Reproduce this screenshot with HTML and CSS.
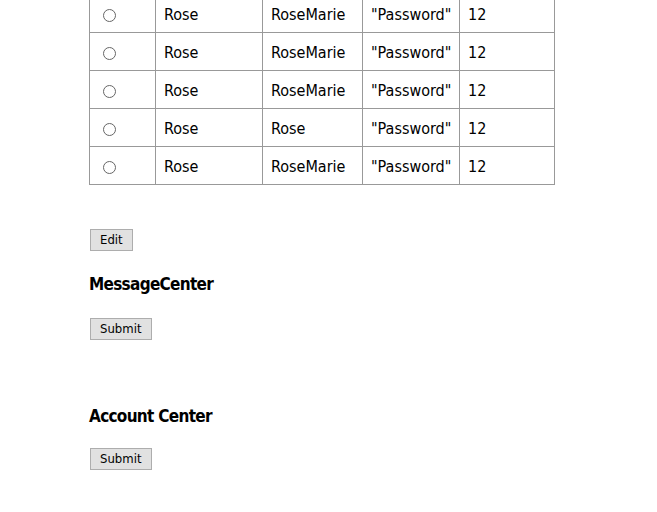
FILE: index.html
```html
<!DOCTYPE html>
<html>
<head>
<meta charset="utf-8">
<link rel="stylesheet" href="styles.css">
</head>
<body>
<main class="page">
  <table class="users">
    <tr><td class="c-sel"><span class="radio"></span></td><td class="c-first">Rose</td><td class="c-user">RoseMarie</td><td class="c-pass">"Password"</td><td class="c-age">12</td></tr>
    <tr><td class="c-sel"><span class="radio"></span></td><td class="c-first">Rose</td><td class="c-user">RoseMarie</td><td class="c-pass">"Password"</td><td class="c-age">12</td></tr>
    <tr><td class="c-sel"><span class="radio"></span></td><td class="c-first">Rose</td><td class="c-user">RoseMarie</td><td class="c-pass">"Password"</td><td class="c-age">12</td></tr>
    <tr><td class="c-sel"><span class="radio"></span></td><td class="c-first">Rose</td><td class="c-user">Rose</td><td class="c-pass">"Password"</td><td class="c-age">12</td></tr>
    <tr><td class="c-sel"><span class="radio"></span></td><td class="c-first">Rose</td><td class="c-user">RoseMarie</td><td class="c-pass">"Password"</td><td class="c-age">12</td></tr>
  </table>
  <button class="btn btn-edit">Edit</button>
  <h3 class="heading heading-msg">MessageCenter</h3>
  <button class="btn">Submit</button>
  <h3 class="heading heading-acct">Account Center</h3>
  <button class="btn">Submit</button>
</main>
</body>
</html>
```
FILE: styles.css
```css
html, body {
  margin: 0;
  padding: 0;
  background: #fff;
}
body {
  font-family: "DejaVu Sans Condensed", "DejaVu Sans", sans-serif;
  font-stretch: condensed;
  color: #000;
  overflow: hidden;
}
.page {
  padding-left: 89px;
  display: flex;
  flex-direction: column;
  align-items: flex-start;
}
.users {
  border-collapse: collapse;
  margin-top: -6px;
  font-size: 16px;
}
.users td {
  border: 1px solid #999;
  height: 38px;
  padding: 2px 0 0 8px;
  box-sizing: border-box;
  vertical-align: middle;
  white-space: nowrap;
}
.users td.c-sel { width: 66px; padding-left: 13px; }
.users td.c-first { width: 107px; }
.users td.c-user { width: 100px; }
.users td.c-pass { width: 97px; }
.users td.c-age { width: 95px; }
.radio {
  display: block;
  width: 11px;
  height: 11px;
  border: 1px solid #666;
  border-radius: 50%;
  margin-top: 2px;
}
.btn {
  font-family: "DejaVu Sans Condensed", "DejaVu Sans", sans-serif;
  font-stretch: condensed;
  font-size: 13px;
  line-height: 16px;
  padding: 2px 9px 2px;
  margin-left: 1px;
  height: 22px;
  background: #e1e1e1;
  border: 1px solid #adadad;
  color: #000;
  border-radius: 0;
}
.btn-edit { margin-top: 44px; }
.heading {
  font-size: 17px;
  font-weight: bold;
  letter-spacing: -0.7px;
  margin: 0;
  line-height: 20px;
}
.heading-msg { margin-top: 23px; margin-bottom: 24px; }
.heading-acct { margin-top: 66px; margin-bottom: 22px; }
```
